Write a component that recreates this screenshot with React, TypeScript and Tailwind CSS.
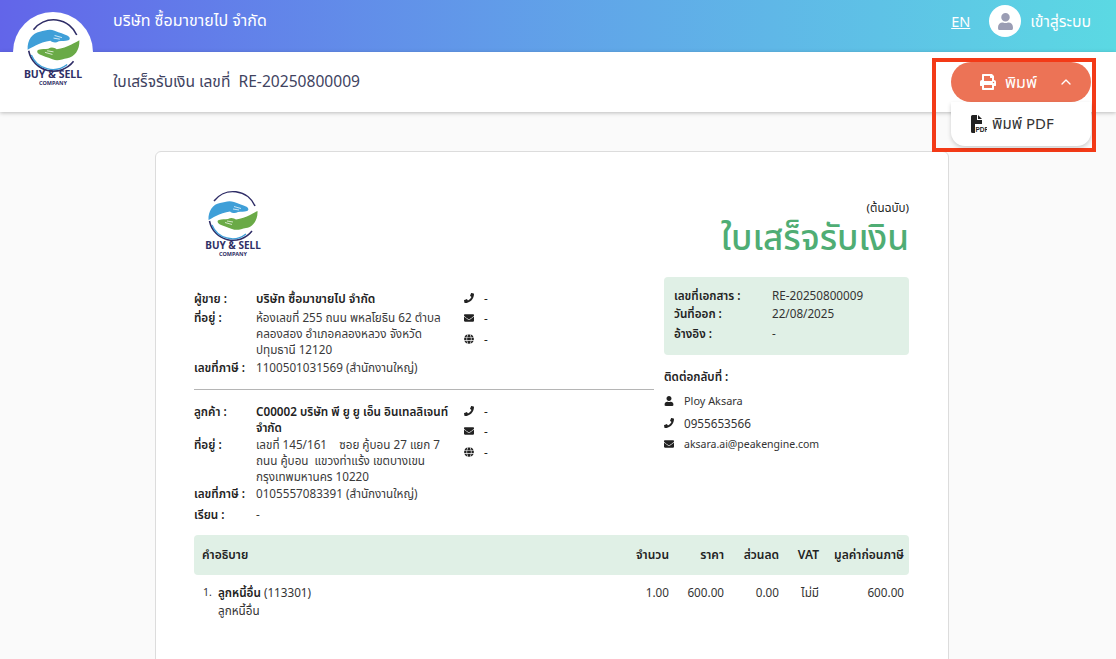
import React from 'react';
import { FaEnvelope, FaGlobe, FaPhone, FaPrint, FaUser } from 'react-icons/fa';
import { ChevronUp } from 'lucide-react';

const handPath =
  'M8.5 35C8 26 13 19 20 18C25 17 29 15 34 17C39 19 43 20 46 21.5C49 23 49 25.5 47 26C44 27 41 26.5 38 27C35 29 32 28 30 26.5C25 27 20 29 16 31C13 32.5 10.5 34 8.5 35Z';

const Logo: React.FC<{ small?: boolean }> = ({ small }) => (
  <div className="flex flex-col items-center text-[#2f2f66]">
    <svg viewBox="6 4 54 54" className={small ? 'h-[57px] w-[57px]' : '-mt-[2px] h-[54px] w-[54px]'}>
      <path d="M14 16A24 24 0 0 1 55 21" fill="none" stroke="#2e2c66" strokeWidth="1.5" />
      <path d="M9.5 36A24 24 0 0 0 52 46" fill="none" stroke="#2e2c66" strokeWidth="1.5" />
      <path d="M12 40A22 22 0 0 0 46 49" fill="none" stroke="#3f9fd8" strokeWidth="1.3" />
      <path d={handPath} fill="#3f9fd8" />
      <path d="M34 21.5L41 23.5M33 24L39 25" stroke="#fff" strokeWidth="0.7" fill="none" />
      <path d={handPath} fill="#6aaa47" transform="rotate(180 33 30.5)" />
      <path d="M32 39.5L25 37.5M33 37L27 36" stroke="#fff" strokeWidth="0.7" fill="none" />
    </svg>
    <div className={`font-bold leading-[9px] whitespace-nowrap ${small ? '-mt-[4px] text-[10.5px]' : '-mt-[2px] text-[10px]'}`}>BUY &amp; SELL</div>
    <div className="text-[5.5px] leading-[8px] font-bold">COMPANY</div>
  </div>
);

const PdfIcon = () => (
  <svg viewBox="0 0 16 18" className="h-[18px] w-[16px]">
    <path d="M0 1.5Q0 0 1.5 0H6V5H11V9H4V18H1.5Q0 18 0 16.5Z" fill="#222" />
    <path d="M7 0 11 4H7Z" fill="#222" />
    <text x="4.4" y="16.5" fontSize="6.5" fontWeight="700" fill="#222" fontFamily="Liberation Sans, sans-serif">PDF</text>
  </svg>
);

const Row: React.FC<{ label: string; className?: string; children: React.ReactNode }> = ({ label, className, children }) => (
  <div className={`flex ${className ?? ''}`}>
    <div className="w-[62px] shrink-0 font-semibold whitespace-nowrap text-[#222]">{label}</div>
    <div className="whitespace-nowrap text-[#3a3a3a]">{children}</div>
  </div>
);

const ContactIcons = () => (
  <div className="w-[40px] shrink-0 text-[#222]">
    <div className="flex h-[16px] items-center gap-[10px]"><FaPhone className="h-[10px] w-[10px]" /><span>-</span></div>
    <div className="mt-[4px] flex h-[16px] items-center gap-[10px]"><FaEnvelope className="h-[10px] w-[10px]" /><span>-</span></div>
    <div className="mt-[5px] flex h-[16px] items-center gap-[10px]"><FaGlobe className="h-[10px] w-[10px]" /><span>-</span></div>
  </div>
);

const App: React.FC = () => {
  return (
    <div className="relative h-[659px] overflow-hidden bg-[#fafafa] font-['Noto_Sans','Noto_Sans_Thai',sans-serif] text-[11.7px] leading-[16px]">
      <header className="flex h-[52px] items-center bg-gradient-to-r from-[#6265e9] to-[#5bd9e3] pl-[113px] pr-[25px] text-white">
        <div className="-mt-[12px] flex-1 text-[16px]">บริษัท ซื้อมาขายไป จำกัด</div>
        <a className="-mt-[10px] text-[14.5px] underline">EN</a>
        <div className="-mt-[10px] ml-[19px] flex h-8 w-8 items-center justify-center rounded-full bg-white">
          <FaUser className="h-[17px] w-[17px] text-[#9b9db4]" />
        </div>
        <div className="-mt-[10px] ml-[9px] text-[15.8px]">เข้าสู่ระบบ</div>
      </header>
      <div className="flex h-[60px] items-center bg-white pb-[3px] pl-[113px] text-[15.6px] text-[#41435f] shadow-[0_1px_4px_rgba(0,0,0,0.25)]">
        ใบเสร็จรับเงิน เลขที่&nbsp; RE-20250800009
      </div>

      <div className="absolute top-[12px] left-[13px] h-[40px] w-[80px] rounded-t-full bg-white" />
      <div className="absolute top-[17px] left-[23px] w-[60px]"><Logo small /></div>

      <div className="absolute top-[58px] left-[932px] h-[94px] w-[164px] border-[4px] border-[#f33a17]" />
      <div className="absolute top-[62px] left-[951px] w-[140px]">
        <button className="flex h-[40px] w-full items-center rounded-full bg-[#ec7356] pl-[29px] text-[16px] text-white">
          <FaPrint className="h-[16px] w-[16px]" />
          <span className="ml-[9px] -mt-px">พิมพ์</span>
          <ChevronUp className="ml-[21px] h-[16px] w-[16px]" />
        </button>
        <div className="flex h-[44px] items-center rounded-b-[14px] bg-white pl-[20px] text-[15px] text-[#333] shadow-[0_2px_4px_rgba(0,0,0,0.18)]">
          <PdfIcon />
          <span className="ml-[5px] -mt-[3px]">พิมพ์ PDF</span>
        </div>
      </div>

      <main className="mt-[39px] ml-[155px] w-[794px] rounded-t-[6px] border border-[#dcdcdc] bg-white pt-[39px] pr-[39px] pb-[80px] pl-[38px] text-[#333]">
        <div className="flex h-[86px] justify-between">
          <div className="ml-[9px] w-[60px]"><Logo /></div>
          <div className="text-right">
            <div className="mt-[9px] text-[11.6px] text-[#222]">(ต้นฉบับ)</div>
            <div className="mt-[3px] text-[35px] leading-[36px] font-medium text-[#4fad74]">ใบเสร็จรับเงิน</div>
          </div>
        </div>

        <div className="flex">
          <div className="w-[460px]">
            <div className="flex pt-[13px]">
              <div className="w-[270px]">
                <Row label="ผู้ขาย :" className="mb-[2px]"><span className="text-[12px] font-semibold text-[#222]">บริษัท ซื้อมาขายไป จำกัด</span></Row>
                <Row label="ที่อยู่ :" className="mb-[2px]">ห้องเลขที่ 255 ถนน พหลโยธิน 62 ตำบล<br />คลองสอง อำเภอคลองหลวง จังหวัด<br />ปทุมธานี 12120</Row>
                <Row label="เลขที่ภาษี :">1100501031569 (สำนักงานใหญ่)</Row>
              </div>
              <ContactIcons />
            </div>
            <div className="mt-[14px] mb-[13px] h-px bg-[#b5b5b5]" />
            <div className="flex">
              <div className="w-[270px]">
                <Row label="ลูกค้า :" className="mb-px"><span className="font-semibold text-[#222]">C00002 บริษัท พี ยู ยู เอ็น อินเทลลิเจนท์<br />จำกัด</span></Row>
                <Row label="ที่อยู่ :" className="mb-[1px]">เลขที่ 145/161 &nbsp;&nbsp; ซอย คู้บอน 27 แยก 7<br />ถนน คู้บอน&nbsp; แขวงท่าแร้ง เขตบางเขน<br />กรุงเทพมหานคร 10220</Row>
                <Row label="เลขที่ภาษี :" className="mb-[5px]">0105557083391 (สำนักงานใหญ่)</Row>
                <Row label="เรียน :">-</Row>
              </div>
              <ContactIcons />
            </div>
          </div>

          <div className="ml-[10px] w-[245px]">
            <div className="h-[78px] rounded-[4px] bg-[#e0f0e6] px-[10px] pt-[10px]">
              <div className="flex h-[18px]"><span className="w-[98px] font-semibold text-[#222]">เลขที่เอกสาร :</span><span>RE-20250800009</span></div>
              <div className="flex h-[20px]"><span className="w-[98px] font-semibold text-[#222]">วันที่ออก :</span><span>22/08/2025</span></div>
              <div className="flex"><span className="w-[98px] font-semibold text-[#222]">อ้างอิง :</span><span>-</span></div>
            </div>
            <div className="mt-[13px] font-semibold text-[#222]">ติดต่อกลับที่ :</div>
            <div className="mt-[9px] flex h-[16px] items-center"><FaUser className="h-[10px] w-[10px] text-[#222]" /><span className="ml-[10px] text-[10.9px]">Ploy Aksara</span></div>
            <div className="mt-[6px] flex h-[16px] items-center"><FaPhone className="h-[10px] w-[10px] text-[#222]" /><span className="ml-[10px]">0955653566</span></div>
            <div className="mt-[5px] flex h-[16px] items-center"><FaEnvelope className="h-[10px] w-[10px] text-[#222]" /><span className="ml-[10px] text-[10.5px]">aksara.ai@peakengine.com</span></div>
          </div>
        </div>

        <div className="mt-[13px] flex h-[40px] items-center rounded-[4px] bg-[#e0f0e6] px-[5px] text-[12px] font-semibold text-[#222]">
          <div className="flex-1 pl-[3px]">คำอธิบาย</div>
          <div className="w-[60px] text-right">จำนวน</div>
          <div className="w-[55px] text-right">ราคา</div>
          <div className="w-[55px] text-right">ส่วนลด</div>
          <div className="w-[40px] text-right">VAT</div>
          <div className="w-[85px] text-right whitespace-nowrap">มูลค่าก่อนภาษี</div>
        </div>
        <div className="mt-[9px] flex px-[5px]">
          <div className="flex flex-1">
            <span className="w-[19px] pl-[4px] text-[10.5px]">1.</span>
            <div>
              <div><span className="font-semibold text-[#222]">ลูกหนี้อื่น</span> (113301)</div>
              <div className="mt-[2px]">ลูกหนี้อื่น</div>
            </div>
          </div>
          <div className="w-[60px] text-right">1.00</div>
          <div className="w-[55px] text-right">600.00</div>
          <div className="w-[55px] text-right">0.00</div>
          <div className="w-[40px] text-right">ไม่มี</div>
          <div className="w-[85px] text-right">600.00</div>
        </div>
      </main>
    </div>
  );
};

export default App;
